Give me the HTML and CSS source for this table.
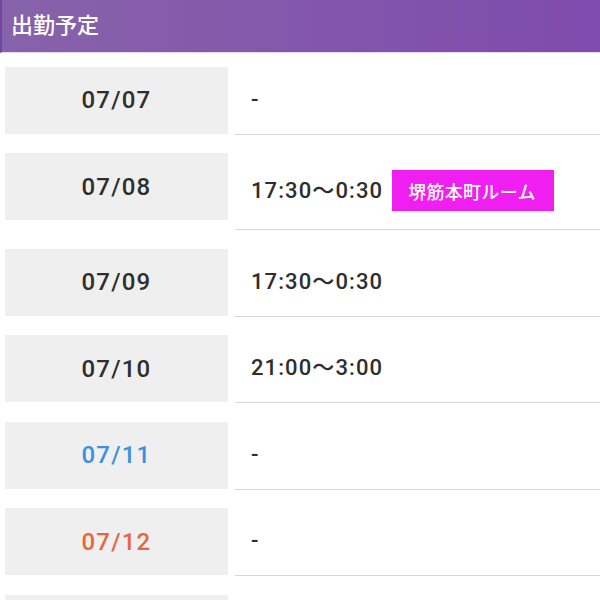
FILE: index.html
```html
<!DOCTYPE html>
<html lang="ja">
<head>
<meta charset="utf-8">
<title>出勤予定</title>
<link rel="stylesheet" href="styles.css">
</head>
<body>
<h2 class="title">出勤予定</h2>
<div class="schedule">
  <div class="row"><div class="date">07/07</div><div class="time">-</div></div>
  <div class="row"><div class="date">07/08</div><div class="time">17:30〜0:30<span class="room">堺筋本町ルーム</span></div></div>
  <div class="row"><div class="date">07/09</div><div class="time">17:30〜0:30</div></div>
  <div class="row"><div class="date">07/10</div><div class="time">21:00〜3:00</div></div>
  <div class="row"><div class="date sat">07/11</div><div class="time">-</div></div>
  <div class="row"><div class="date sun">07/12</div><div class="time">-</div></div>
  <div class="row"><div class="date">07/13</div><div class="time">-</div></div>
</div>
</body>
</html>
```
FILE: styles.css
```css
html, body {
  margin: 0;
  padding: 0;
  background: #fff;
}
body {
  font-family: Roboto, "Noto Sans CJK JP", sans-serif;
  color: #2e2e2e;
}
.title {
  margin: 0;
  height: 53px;
  box-sizing: border-box;
  padding-left: 9px;
  border-left: 2px solid #6f47a0;
  background: linear-gradient(to right, #8763aa, #7f4bad);
  border-bottom: 1px solid #e6d9ee;
  color: #fff;
  font-family: "Noto Sans CJK JP", sans-serif;
  font-size: 22px;
  font-weight: 500;
  line-height: 47px;
}
.schedule {
  margin-top: 13.5px;
}
.row {
  display: flex;
  align-items: flex-start;
  margin-bottom: 18.5px;
}
.date {
  flex: 0 0 223px;
  height: 67px;
  margin-left: 5px;
  background: #efefef;
  display: flex;
  align-items: center;
  justify-content: center;
  font-size: 24px;
  font-weight: 500;
  letter-spacing: 1.2px;
  color: #2e2e2e;
}
.date.sat { color: #3d8fe0; }
.date.sun { color: #e8663e; }
.time {
  flex: 1;
  margin-left: 7px;
  padding: 17px 0 18px 16px;
  min-height: 32px;
  display: flex;
  align-items: center;
  border-bottom: 1.5px solid #d6d6d6;
  font-size: 22px;
  font-weight: 500;
  letter-spacing: 1.1px;
  line-height: 32px;
}
.room {
  margin-left: 9px;
  height: 41px;
  padding: 0 18px 0 16px;
  display: inline-flex;
  align-items: center;
  background: #f01ef0;
  color: #fff;
  font-family: "Noto Sans CJK JP", sans-serif;
  font-size: 18px;
  font-weight: 500;
  letter-spacing: 0.3px;
}
```
